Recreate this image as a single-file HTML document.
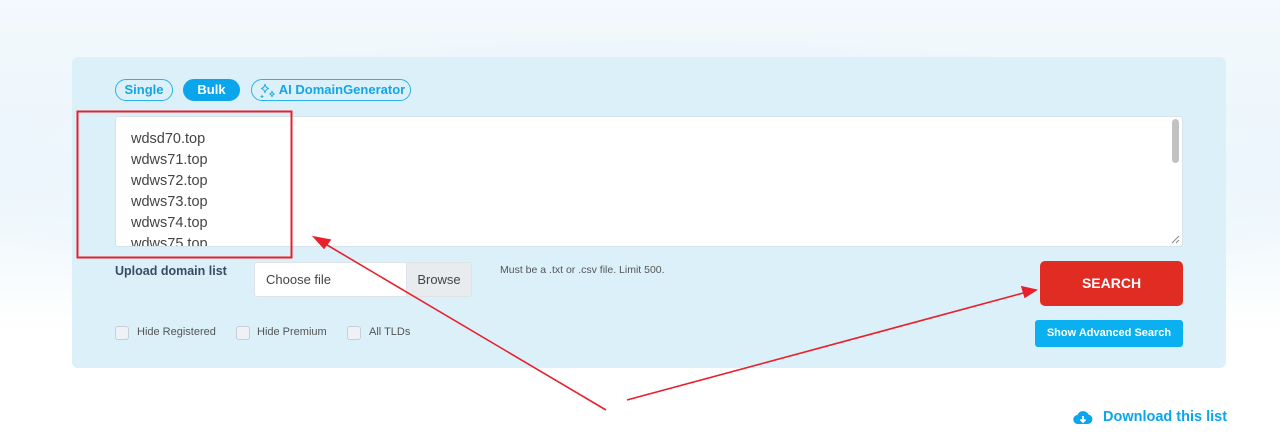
<!DOCTYPE html>
<html><head><meta charset="utf-8"><style>
*{box-sizing:border-box;margin:0;padding:0}
body{width:1280px;height:443px;overflow:hidden;position:relative;font-family:"Liberation Sans",sans-serif;background:linear-gradient(180deg,#f3f9fd 0%,#eaf5fb 40%,#fff 75%);}
.bgwave{position:absolute;left:-100px;top:40px;width:1500px;height:300px;border-radius:50%;background:radial-gradient(ellipse at 50% 40%,#e3f2fa 0%,#eef7fc 50%,rgba(255,255,255,0) 70%);}
.panel{position:absolute;left:72px;top:57px;width:1154px;height:311px;background:#dcf0fa;border-radius:6px;}
.pill{position:absolute;top:79px;height:22px;border:1.5px solid #2bb0ea;border-radius:11px;color:#12a6e6;font-weight:bold;font-size:13px;line-height:19px;text-align:center}
.ta{position:absolute;left:115px;top:116px;width:1068px;height:131px;background:#fff;border:1px solid #d8e2ea;border-radius:3px;overflow:hidden}
.ln{position:absolute;left:15px;font-size:14.5px;color:#444}
.sb{position:absolute;right:3px;top:2px;width:7px;height:44px;background:#c2c2c2;border-radius:4px}
.lbl{position:absolute;font-size:12px;color:#555}
.cb{position:absolute;top:326px;width:14px;height:14px;border:1px solid #c8ced6;border-radius:3px;background:#eef2f6}
</style></head><body>
<div class="bgwave"></div>
<div class="panel"></div>
<div class="pill" style="left:115px;width:58px">Single</div>
<div class="pill" style="left:183px;width:57px;background:#0aa5ea;border-color:#0aa5ea;color:#fff">Bulk</div>
<div class="pill" style="left:251px;width:160px;padding-left:22px">AI DomainGenerator</div>
<svg style="position:absolute;left:258px;top:82px" width="20" height="18" viewBox="0 0 20 18" fill="none" stroke="#2bb0ea" stroke-width="1.1"><path d="M7 2 Q7.5 6 11 6.5 Q7.5 7 7 11 Q6.5 7 3 6.5 Q6.5 6 7 2Z"/><path d="M14 9 Q14.3 11.5 16.5 12 Q14.3 12.5 14 15 Q13.7 12.5 11.5 12 Q13.7 11.5 14 9Z"/><path d="M4 13 v3 M2.5 14.5 h3"/></svg>
<div class="ta">
<div class="ln" style="top:14px">wdsd70.top</div><div class="ln" style="top:35px">wdws71.top</div><div class="ln" style="top:56px">wdws72.top</div><div class="ln" style="top:77px">wdws73.top</div><div class="ln" style="top:98px">wdws74.top</div>
<div class="ln" style="top:119px">wdws75.top</div>
<div class="sb"></div>
<svg style="position:absolute;right:2px;bottom:2px" width="9" height="9"><path d="M8 1L1 8M8 5L5 8" stroke="#888"/></svg>
</div>
<div style="position:absolute;left:115px;top:264px;font-size:12.5px;font-weight:bold;color:#3b4a63">Upload domain list</div>
<div style="position:absolute;left:254px;top:262px;width:218px;height:35px;background:#fff;border:1px solid #dde3e8;border-radius:3px;overflow:hidden">
<div style="position:absolute;left:11px;top:9px;font-size:13px;color:#444">Choose file</div>
<div style="position:absolute;right:0;top:0;width:65px;height:35px;background:#e9ecef;border-left:1px solid #dde3e8;font-size:13px;color:#444;text-align:center;line-height:33px">Browse</div></div>
<div class="lbl" style="left:500px;top:264px;font-size:10.5px">Must be a .txt or .csv file. Limit 500.</div>
<div class="cb" style="left:115px"></div><div class="lbl" style="left:137px;top:326px;font-size:11px">Hide Registered</div>
<div class="cb" style="left:236px"></div><div class="lbl" style="left:257px;top:326px;font-size:11px">Hide Premium</div>
<div class="cb" style="left:347px"></div><div class="lbl" style="left:369px;top:326px;font-size:11px">All TLDs</div>
<div style="position:absolute;left:1040px;top:261px;width:143px;height:45px;background:#e12c24;border-radius:5px;color:#fff;font-weight:bold;font-size:14px;text-align:center;line-height:45px">SEARCH</div>
<div style="position:absolute;left:1035px;top:320px;width:148px;height:27px;background:#0bb0f0;border-radius:3px;color:#fff;font-weight:bold;font-size:11px;text-align:center;line-height:27px">Show Advanced Search</div>
<svg style="position:absolute;left:1073px;top:409px" width="20" height="17" viewBox="0 0 20 17"><path d="M5 15 A4.5 4.5 0 0 1 4.5 6 A6 6 0 0 1 15.5 5.5 A4.8 4.8 0 0 1 15 15Z" fill="#0aa5ea"/><path d="M10 7 v6 M7.5 10.5 L10 13 L12.5 10.5" stroke="#fff" stroke-width="1.8" fill="none"/></svg>
<div style="position:absolute;left:1103px;top:409px;font-size:14.5px;font-weight:bold;color:#0aa5ea">Download this list</div>
<svg style="position:absolute;left:0;top:0" width="1280" height="443"><rect x="77.5" y="111.5" width="214" height="146" fill="none" stroke="#e8202b" stroke-width="2"/><g stroke="#e8202b" stroke-width="1.6" fill="#e8202b"><line x1="606" y1="410" x2="322" y2="242"/><path d="M314 237 L330 240 L324 248Z"/><line x1="627" y1="400" x2="1027" y2="292"/><path d="M1036 290 L1022 287 L1025 297Z"/></g></svg>
</body></html>
